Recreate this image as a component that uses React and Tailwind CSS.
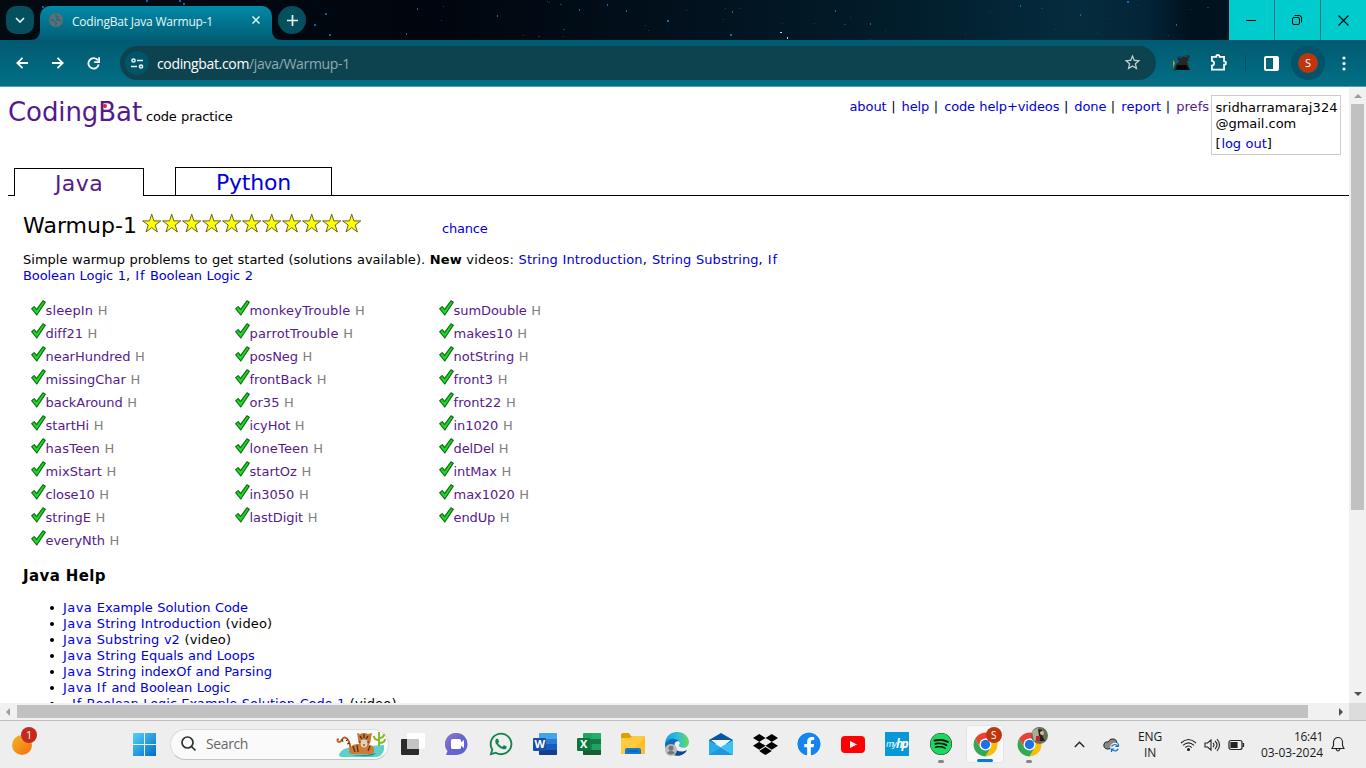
import React from "react";
import { FaWhatsapp, FaDropbox, FaFacebook, FaSpotify } from "react-icons/fa";
import { MdStarBorder } from "react-icons/md";

const ADVANCE = {
  a: 601, b: 623, c: 521, d: 623, e: 596, f: 352, g: 623, h: 633, i: 274, j: 344, k: 592, l: 274, m: 973,
  n: 633, o: 607, p: 623, q: 623, r: 427, s: 521, t: 394, u: 633, v: 592, w: 818, x: 592, y: 592, z: 525,
  A: 684, B: 686, C: 698, D: 771, E: 632, F: 575, G: 775, H: 751, I: 421, J: 455, K: 693, L: 557, M: 843,
  N: 748, O: 787, P: 603, Q: 787, R: 695, S: 684, T: 616, U: 732, V: 684, W: 989, X: 685, Y: 615, Z: 685,
  " ": 352, "-": 454, "(": 454, ")": 454, "[": 454, "]": 454, ",": 364, ".": 364, "|": 454, "@": 1000, "+": 818, ":": 454,
};
const ctx = document.createElement("canvas").getContext("2d");

function Word({ text, size, weight = 400, family = "DejaVu Sans", width }) {
  const target = width ?? [...text].reduce((s, c) => s + (ADVANCE[c] ?? 636), 0) * size / 1000;
  ctx.font = `${weight} ${size}px "${family}"`;
  const spacing = (target - ctx.measureText(text).width) / text.length;
  return (
    <span className="inline-block whitespace-pre" style={{ width: target, letterSpacing: spacing, fontSize: size, fontFamily: `"${family}", sans-serif`, fontWeight: weight }}>{text}</span>
  );
}
function T({ children, size = 13, ...rest }) {
  if (rest.width) return <Word text={children} size={size} {...rest} />;
  return children.split(/( )/).filter(Boolean).map((w, i) => <Word key={i} text={w} size={size} {...rest} />);
}
const Link = ({ children, ...r }) => <span className="text-[#0000d8]"><T {...r}>{children}</T></span>;
const Ui = ({ children, size = 12, width }) => <Word text={children} size={size} width={width} family="Open Sans" />;

const STARS = [[17,8],[147,1],[160,4],[179,9],[43,6],[41,20],[97,15],[163,29],[163,36],[226,10],[245,25],[248,30],[267,20],[286,10],[325,8],[332,11],[323,19],[380,32],[387,37],[382,23],[414,23],[435,10],[444,24],[450,17],[470,23],[485,30],[470,39],[330,34],[340,8],[149,2],[207,4],[123,35],[138,36],[6,33],[565,34],[590,12],[620,5],[641,8],[655,29],[680,14],[697,32],[710,18],[727,1],[737,5],[768,35],[776,24],[790,9],[807,7]];

function Sky() {
  return (
    <svg className="absolute inset-0" width="1366" height="40" aria-hidden="true">
      <defs><linearGradient id="sky"><stop offset="0" stopColor="#020a12"/><stop offset=".33" stopColor="#01060e"/><stop offset=".5" stopColor="#02111d"/><stop offset=".66" stopColor="#021d2b"/><stop offset=".79" stopColor="#052c3d"/><stop offset=".84" stopColor="#032437"/><stop offset=".87" stopColor="#01121f"/><stop offset="1" stopColor="#021622"/></linearGradient></defs>
      <rect width="1366" height="40" fill="url(#sky)" />
      {STARS.map(([x, y], i) => <rect key={i} x={x + 400} y={y} width={i % 5 === 2 ? 2 : 1} height={i % 3 ? 1 : 2} fill={i === 18 || i === 17 ? "#9bdcff" : i % 3 === 0 ? "#126ab5" : "#08416f"} />)}
      {[[42,6],[146,0],[179,0],[183,3],[325,13],[314,24],[329,34]].map(([x,y]) => <rect key={x} x={x} y={y} width="2" height="2" fill="#1264a5"/>)}
    </svg>
  );
}

function TabStrip() {
  return (
    <div className="relative h-10">
      <Sky />
      <div className="relative flex h-10">
        <div className="mt-1.5 ml-1.5 flex h-7 w-7 items-center justify-center rounded-[10px] bg-[#05505f]">
          <svg width="10" height="6" fill="none" stroke="#e6f5f7" strokeWidth="1.7"><path d="M1 1l4 4 4-4" /></svg>
        </div>
        <div className="relative mt-1.5 ml-1.5 flex h-[34px] w-[232px] rounded-t-[10px] bg-linear-to-b from-[#018aa9] to-[#015e75]">
          <svg className="absolute -left-2.5 bottom-0" width="10" height="10"><path d="M10 0v10H0Q10 10 10 0z" fill="#015f76" /></svg>
          <svg className="absolute -right-2.5 bottom-0" width="10" height="10"><path d="M0 0v10h10Q0 10 0 0z" fill="#015f76" /></svg>
          <svg className="mt-[7px] ml-[9px]" width="14" height="14" viewBox="0 0 14 14"><circle cx="7" cy="7" r="7" fill="#686a70"/><path d="M1.800 7.300c1.500-.6 2.800-.2 3.300.9.6 1.200 2.200.6 2.200 2 0 1-.9 1-1.100 2.300M7.300 1.600c-.9 1.300.2 2 1.300 2s.9 1.800-.4 2.100-.4 1.500 1.200 1.300 1.500 1 2.900.7" fill="none" stroke="#04778f" strokeWidth="1.300"/></svg>
          <div className="ml-[9px] h-7 text-[#e9f6f8] leading-[28px]"><Ui width={141}>CodingBat Java Warmup-1</Ui></div>
          <svg className="mt-2.5 ml-[39px]" width="8" height="8" stroke="#e9f6f8" strokeWidth="1.5"><path d="M.5.5l7 7M7.500.5l-7 7" /></svg>
        </div>
        <div className="mt-1.5 ml-1.5 flex h-7 w-7 items-center justify-center rounded-full bg-[#05505f]">
          <svg width="11" height="11" stroke="#e9f6f8" strokeWidth="1.7"><path d="M5.500 0v11M0 5.500h11" /></svg>
        </div>
        <div className="ml-auto flex gap-px bg-[#047c83]">
          <div className="flex w-[45px] items-center justify-center bg-[#01cccd] pr-px"><div className="h-px w-2.5 bg-black" /></div>
          <div className="flex w-[45px] items-center justify-center bg-[#01cccd] pr-px"><svg width="10" height="10" fill="none" stroke="#000"><rect x=".5" y="2.500" width="7" height="7" rx="1.500"/><path d="M2.500.5h4.500a2.500 2.500 0 0 1 2.500 2.500v4.500"/></svg></div>
          <div className="flex w-[45px] items-center justify-center bg-[#01cccd] pr-px"><svg width="11" height="11" stroke="#000" strokeWidth="1.1"><path d="M.5.5l10 10M10.500.5l-10 10"/></svg></div>
        </div>
      </div>
    </div>
  );
}

function Toolbar() {
  return (
    <div className="flex h-[47px] items-start border-b border-[#5b97a5] bg-linear-to-b from-[#015a71] to-[#016f86] pt-1.5 text-white">
      <div className="flex h-[34px] w-[120px] items-center gap-6 pl-4">
        <svg width="12" height="12" fill="none" stroke="#fff" strokeWidth="1.800"><path d="M12 6H1.500M6.500 .8L1.300 6l5.200 5.200"/></svg>
        <svg width="12" height="12" fill="none" stroke="#fff" strokeWidth="1.800"><path d="M0 6h10.500M5.500 .8L10.700 6l-5.200 5.200"/></svg>
        <svg className="-ml-px" width="13" height="13" fill="none" stroke="#fff" strokeWidth="1.800"><path d="M10.800 3.300A5.200 5.200 0 1 0 11.700 7.500M12.100.3v4.900H7.200"/></svg>
      </div>
      <div className="flex h-[34px] w-[1036px] items-center rounded-full bg-[#0d434f] pl-[5px]">
        <div className="flex h-6 w-6 items-center justify-center rounded-full bg-[#015569]">
          <svg width="13" height="11" fill="none" stroke="#eef7f8" strokeWidth="1.5"><circle cx="2.500" cy="2.500" r="1.600"/><path d="M6 2.500h6M0 8.500h6"/><circle cx="10" cy="8.500" r="1.600"/></svg>
        </div>
        <div className="ml-2 leading-[34px]"><Ui size={14} width={92}>codingbat.com</Ui><span className="text-[#8fabb1]"><Ui size={14} width={101}>/java/Warmup-1</Ui></span></div>
        <MdStarBorder className="mr-[14px] mb-0.5 ml-auto" size={19} color="#c4cfd1" />
      </div>
      <div className="flex h-[34px] flex-1 items-center">
        <svg className="ml-[17px]" width="18" height="18"><path d="M4 3l3 1 3-1 4 0 1-2 2 2-2 1 1 2-2 1 1 4 2 5H3L1 17l2-7 3-2z" fill="#252729"/><path d="M0 6l2 3-2 5z" fill="#e28a08"/><path d="M4 11h9l4 5H3z" fill="#050505"/><path d="M5 2q4 2 7 0 5-2 4 2" stroke="#30383c" fill="none"/></svg>
        <svg className="ml-[18px]" width="20" height="20" fill="none" stroke="#fff" strokeWidth="1.8"><path d="M2.900 3.800h4.300c0-2.400 3.400-2.400 3.400 0h4.500v4.500c2.500 0 2.500 3.400 0 3.400v5H2.900v-4c3-.2 3-4.600 0-4.800z"/></svg>
        <div className="ml-[16px] h-4 w-px bg-[#0a4b5c]" />
        <svg className="ml-[18px]" width="15" height="15"><rect x="1" y="1" width="13" height="13" rx="1" fill="none" stroke="#fff" strokeWidth="2"/><path d="M9 1h5v13H9z" fill="#fff"/></svg>
        <div className="ml-3 flex h-[34px] w-[34px] items-center justify-center rounded-full bg-[#03536a]"><div className="flex h-5 w-5 items-center justify-center rounded-full bg-[#bf360c] leading-5"><Ui size={11} width={6}>S</Ui></div></div>
        <svg className="ml-[17px]" width="4" height="15" fill="#fff"><circle cx="2" cy="2" r="1.600"/><circle cx="2" cy="7.500" r="1.600"/><circle cx="2" cy="13" r="1.600"/></svg>
      </div>
    </div>
  );
}

const StarIcon = () => <svg width="20" height="21"><path d="M9.700 1.200l2.200 6.700h6.900l-5.600 4.100 2.200 7-5.700-4.300-5.700 4.300 2.200-7L.6 7.900h6.900z" fill="#ff0" stroke="#55551b" strokeWidth=".9"/></svg>;
const Check = () => <svg className="mt-px shrink-0" width="15" height="16"><path d="M.7 8.600l2.500-2 2.300 3L12 .8l2.300 1.400L5.800 15z" fill="#1ddd24" stroke="#116c16" strokeWidth="1.200" strokeLinejoin="round"/></svg>;

const PROBLEMS = [
  ["sleepIn", "monkeyTrouble", "sumDouble"], ["diff21", "parrotTrouble", "makes10"], ["nearHundred", "posNeg", "notString"],
  ["missingChar", "frontBack", "front3"], ["backAround", "or35", "front22"], ["startHi", "icyHot", "in1020"],
  ["hasTeen", "loneTeen", "delDel"], ["mixStart", "startOz", "intMax"], ["close10", "in3050", "max1020"],
  ["stringE", "lastDigit", "endUp"], ["everyNth"],
];
const HELP = [["Java Example Solution Code"], ["Java String Introduction", " (video)"], ["Java Substring v2", " (video)"], ["Java String Equals and Loops"], ["Java String indexOf and Parsing"], ["Java If and Boolean Logic"], ["If Boolean Logic Example Solution Code 1", " (video)"]];
const NAV = ["about", "help", "code help+videos", "done", "report"];

function Page() {
  return (
    <main className="h-[616px] w-[1349px] overflow-hidden bg-white font-['DejaVu_Sans',sans-serif] text-[13px] text-black">
      <div className="flex h-20 pl-2">
        <div className="mt-1.5 h-10 text-[#551a8b] text-[26px] leading-[38px]">
          <span className="relative"><Word text="CodingBat" size={26} width={134} /><span className="absolute top-[7px] left-[95px] h-1 w-1 rounded-full bg-[#f01830]" /></span>
        </div>
        <div className="mt-[22px] ml-[4px] leading-4"><T>code practice</T></div>
        <div className="mt-3 ml-auto leading-4 whitespace-nowrap">
          {NAV.map((n) => <React.Fragment key={n}><Link>{n}</Link><T>{" | "}</T></React.Fragment>)}<span className="text-[#551a8b]"><T>prefs</T></span>
        </div>
        <div className="mt-2 mr-2 ml-[2px] h-[60px] w-[130px] shrink-0 border border-[#ccc] pt-[4px] pl-[3.5px] leading-4">
          <div className="h-4 whitespace-nowrap"><T>sridharramaraj324</T></div><div className="h-5"><T>@gmail.com</T></div><div><T>[</T><Link>log out</Link><T>]</T></div>
        </div>
      </div>
      <div className="ml-2 flex h-[29px] items-end text-[22px]">
        <div className="h-px w-1.5 bg-black" />
        <div className="h-7 w-[130px] border border-b-0 border-black text-center text-[#551a8b] leading-[29px]"><Word text="Java" size={22} width={48} /></div>
        <div className="h-px w-[31px] bg-black" />
        <div className="h-[29px] w-[157px] border border-black text-center leading-[29px]"><span className="text-[#0000d8]"><Word text="Python" size={22} width={75} /></span></div>
        <div className="h-px flex-1 bg-black" />
      </div>
      <div className="flex h-14 pl-[23px]">
        <div className="mt-[15px] w-[119px] text-[22px] leading-[30px]"><Word text="Warmup-1" size={22} width={114} /></div>
        <div className="mt-[17px] flex h-[21px]">{Array.from({ length: 11 }, (_, i) => <StarIcon key={i} />)}</div>
        <div className="mt-[25px] ml-20 leading-4"><Link>chance</Link></div>
      </div>
      <div className="h-[47px] pl-[23px] leading-4">
        <div className="h-4 whitespace-nowrap"><T>Simple warmup problems to get started (solutions available). </T><Word text="New" size={13} weight={700} width={32} /><T>{" videos: "}</T><Link>String Introduction</Link><T>{", "}</T><Link>String Substring</Link><T>{", "}</T><Link>If</Link></div>
        <div className="h-4 whitespace-nowrap"><Link>Boolean Logic 1</Link><T>{", "}</T><Link>If Boolean Logic 2</Link></div>
      </div>
      <div className="pl-[31px]">
        {PROBLEMS.map((row) => (
          <div key={row[0]} className="flex h-[23px] leading-[23px]">
            {row.map((p) => <div key={p} className="flex w-[204px] text-[#551a8b]"><Check /><div className="-ml-[0.5px] whitespace-nowrap"><T>{p}</T><span className="text-[#808080]"><T>{" H"}</T></span></div></div>)}
          </div>
        ))}
      </div>
      <div className="h-[48px] pt-[14px] pl-[23px] text-[15px] leading-5"><Word text="Java Help" size={15} weight={700} width={83} /></div>
      <ul>
        {HELP.map(([a, b], i) => (
          <li key={a} className="flex h-4 items-center pl-[50px] leading-4"><span className="mr-[9px] h-1 w-1 rounded-full bg-black" /><div className={i === 6 ? "pl-[9px]" : ""}><Link>{a}</Link>{b && <T>{b}</T>}</div></li>
        ))}
      </ul>
    </main>
  );
}

const Chrome = () => (
  <svg width="25" height="25" viewBox="0 0 48 48"><path d="M4.100 12.500A23 23 0 0 1 43.900 12.500H24L14 29.800z" fill="#ea4335"/><path d="M43.900 12.500A23 23 0 0 1 24 47L34 29.800 24 12.500z" fill="#fbbc04"/><path d="M4.100 12.500A23 23 0 0 0 24 47l10-17.200L14 29.800z" fill="#34a853"/><circle cx="24" cy="24" r="11.500" fill="#fff"/><circle cx="24" cy="24" r="9" fill="#1a73e8"/></svg>
);
const Office = ({ letter, c }) => (
  <div className="relative h-6 w-6">
    <svg width="24" height="24"><rect x="6" y="1" width="18" height="22" rx="1" fill={c[0]}/><path d="M6 7h18v5H6z" fill={c[1]}/><path d="M6 12h18v6H6z" fill={c[2]}/><path d="M6 18h18v4q0 1-1 1H7q-1 0-1-1z" fill={c[3]}/>{letter === "X" && <path d="M15 1h8q1 0 1 1v5h-9zM15 12h9v6h-9z" fill="#23b66f" opacity=".65"/>}<rect y="6" width="13" height="13" rx="1" fill={c[4]}/></svg>
    <div className="absolute top-[5px] left-0 flex h-[13px] w-[13px] items-center justify-center text-white leading-[13px]"><Word text={letter} size={11} weight={700} family="Open Sans" width={letter === "W" ? 10 : 7} /></div>
  </div>
);

const Teams = () => <svg width="24" height="24"><defs><linearGradient id="tm" x2="1" y2="1"><stop stopColor="#967dcd"/><stop offset=".45" stopColor="#6a65c9"/><stop offset="1" stopColor="#5361df"/></linearGradient></defs><path d="M12 1a11 11 0 1 1-1 22H1l1.500-4A11 11 0 0 1 12 1z" fill="url(#tm)"/><rect x="6" y="7" width="10" height="10" rx="1.500" fill="#fff"/><path d="M15 11l4-3v8l-4-3z" fill="#fff"/></svg>;
const Folder = () => <svg width="24" height="24"><path d="M0 3q0-2 2-2h6l2 3h13q1 0 1 1v17H0z" fill="#dca000"/><path d="M0 6h9l2-2h13v18H0z" fill="#ffca3d"/><path d="M24 5v17H8z" fill="#ffbe23"/><path d="M4 22v-4q0-2 2-2h12q2 0 2 2v4z" fill="#137ad0"/><path d="M7 19h10" stroke="#0a539e"/></svg>;
const Edge = () => <svg width="24" height="24"><defs><linearGradient id="ed"><stop stopColor="#2299df"/><stop offset=".5" stopColor="#29bde0"/><stop offset="1" stopColor="#65da55"/></linearGradient></defs><path d="M0 13C0 5 5 0 12 0s12 5 12 10c0 5-5 7-9 5-2-1-1-2 0-4-4-5-11-3-15 2z" fill="url(#ed)"/><path d="M0 12C4 5 10 6 14 9c-6 0-6 7-1 10 4 2 7 1 9-1-3 5-9 7-14 5S0 18 0 12z" fill="#126dbc"/><path d="M10 12c-2 8 6 9 12 6-3 6-9 6-12 5z" fill="#0c4c8c"/><circle cx="6" cy="18" r="6" fill="#bdbdbd"/><circle cx="6" cy="16" r="2.500" fill="#777"/><path d="M2 21q4-5 8 0-4 3-8 0" fill="#777"/></svg>;
const Mail = () => <svg width="24" height="24"><path d="M0 8l12-7 12 7v4H0z" fill="#0855a2"/><path d="M2 8h20l-10 8z" fill="#f1f8fc"/><path d="M0 8l24 15H0z" fill="#27aee8"/><path d="M24 8v15L12 15z" fill="#36c4f1"/><path d="M24 23L12 15.500 0 23z" fill="#2196dc"/></svg>;
const YouTube = () => <svg width="24" height="24"><rect y="4" width="24" height="17" rx="4" fill="#f00"/><path d="M9 9l7 3.500L9 16z" fill="#fff"/></svg>;
const TaskView = () => <svg width="24" height="24"><rect y="7" width="18" height="16" rx="1" fill="#2b2b2b"/><rect x="6" y="1" width="18" height="16" rx="1" fill="#fff"/><path d="M6 7h12v10H6z" fill="#c4c4c4"/></svg>;
const Tiger = () => (
  <svg width="50" height="27" viewBox="0 0 50 27">
    <path d="M3 24q2-8 17-8l28-2q1 10-7 12H8q-5 0-5-2z" fill="#5fd0c7"/><path d="M12 23q12 3 28-1l-2 2q-12 3-26-1z" fill="#278f91"/>
    <path d="M15 20C14 12 12 7 9 6.500S6 11 3.500 11 1 8.500 2.500 7.500" fill="none" stroke="#b76228" strokeWidth="2"/><path d="M14 12l-3 1m1-5l-2 2M6 8l1 3" stroke="#4c2d20"/>
    <path d="M13 20q2-8 10-7h9q7 2 6 7 0 3-4 3H17q-4 0-4-3z" fill="#d07a36"/><path d="M17 15l2 6m2-7l1 7m12-6l-2 5" stroke="#4c2d20" strokeWidth="1.200"/>
    <path d="M21 2l3 1q4-2 8 0l4-1-1 5q0 8-7 9-6-1-6-8z" fill="#c87737"/><path d="M24 10q4-3 8 0l-1 5q-3 3-6 0z" fill="#e5d2b6"/><path d="M28 3v4m-4-2l2 3m6-3l-2 3m-7 3h2m6 0h2m-6 3h2" stroke="#392720" strokeWidth="1.200"/>
    <path d="M43 15V1m0 8q-5 0-5-4m5 2q5 0 5-4m-5 9q6 0 6-4" fill="none" stroke="#86b927" strokeWidth="2"/>
  </svg>
);
const AppSlot = ({ children, dot }) => <div className="relative flex h-12 w-11 shrink-0 items-center justify-center pb-px">{children}{dot && <div className="absolute bottom-[6px] left-[19px] h-[3px] w-1.5 rounded-full bg-[#858585]" />}</div>;

function Taskbar() {
  return (
    <footer className="flex h-12 items-center border-t border-[#bdbdbd] bg-[#eeeeee] font-['Open_Sans',sans-serif] text-xs text-[#191919]">
      <div className="relative ml-3 h-12 w-[121px] shrink-0"><div className="mt-[14px] h-5 w-5 rounded-full bg-linear-to-br from-[#efb52b] to-[#f26a0b]" /><div className="absolute top-[6px] left-[9px] flex h-4 w-4 items-center justify-center rounded-full bg-[#c42b1c] text-white leading-4"><Ui size={11} width={6}>1</Ui></div></div>
      <svg className="shrink-0" width="23" height="23"><defs><linearGradient id="wn" gradientUnits="userSpaceOnUse" x2="23" y2="23"><stop stopColor="#54d1f9"/><stop offset="1" stopColor="#006ccb"/></linearGradient></defs><path d="M0 0h11v11H0zM12 0h11v11H12zM0 12h11v11H0zM12 12h11v11H12z" fill="url(#wn)"/></svg>
      <div className="ml-[14px] flex h-[31px] w-[219px] shrink-0 items-center rounded-full border border-[#dcdcdc] border-b-[#c4c4c4] bg-[#fafafa] pb-px">
        <svg className="ml-2.5" width="16" height="16" fill="none" stroke="#303030" strokeWidth="1.700"><circle cx="6.500" cy="6.500" r="5.500"/><path d="M10.500 10.500l4 4"/></svg>
        <div className="ml-[9px] text-[#666] leading-[29px]"><Ui size={14} width={42}>Search</Ui></div><div className="ml-[88px]"><Tiger /></div>
      </div>
      <div className="ml-[2px] flex">
        <AppSlot><TaskView /></AppSlot><AppSlot><Teams /></AppSlot><AppSlot><FaWhatsapp size={26} color="#168451" /></AppSlot>
        <AppSlot><Office letter="W" c={["#41a5ee", "#2b7cd3", "#185abd", "#103f91", "#174fa9"]} /></AppSlot>
        <AppSlot><Office letter="X" c={["#21a366", "#107c41", "#15854c", "#185c37", "#0e763c"]} /></AppSlot>
        <AppSlot><Folder /></AppSlot><AppSlot><Edge /></AppSlot><AppSlot><Mail /></AppSlot><AppSlot><FaDropbox size={25} color="#000" /></AppSlot>
        <AppSlot><FaFacebook size={24} color="#1485ef" className="rounded-full bg-white" /></AppSlot><AppSlot><YouTube /></AppSlot>
        <AppSlot><div className="flex h-6 w-6 items-center justify-center bg-[#0799d5] text-white italic leading-6"><Word text="my" size={9} width={10} family="Open Sans" /><Word text="hp" size={12} width={12} weight={700} family="Open Sans" /></div></AppSlot>
        <AppSlot dot><FaSpotify size={22} color="#1ed760" className="rounded-full bg-[#07150c]" /></AppSlot>
        <AppSlot><div className="relative flex h-[38px] w-[38px] items-center justify-center rounded border border-[#e5e5e5] bg-[#f8f8f8]"><Chrome /><div className="absolute top-[1px] right-[1px] flex h-4 w-4 items-center justify-center rounded-full bg-[#bf360c] text-white leading-4"><Ui size={10} width={6}>S</Ui></div><div className="absolute bottom-0 left-[10px] h-[3px] w-4 rounded-full bg-[#0878d4]" /></div></AppSlot>
        <AppSlot dot><Chrome /><svg className="absolute top-[6px] right-[3px]" width="17" height="17"><circle cx="8.500" cy="8.500" r="8.500" fill="#607252"/><path d="M1 4l6-3 4 5-8 9z" fill="#a9ae94"/><path d="M7 2l4 1v5l3 6H5l3-5z" fill="#291d20"/><path d="M5 9h4v5H5z" fill="#bd2528"/><circle cx="11" cy="6" r="2" fill="#d9b5a2"/></svg></AppSlot>
      </div>
      <svg className="ml-[23px] shrink-0" width="11" height="7" fill="none" stroke="#222" strokeWidth="1.400"><path d="M.8 6l4.700-4.700L10.200 6"/></svg>
      <svg className="ml-[18px] shrink-0" width="17" height="16"><path d="M4 12q-4-1-3-5 1-3 4-2 2-4 6-3 3 1 3 4 3 2 1 5z" fill="#888" stroke="#282828"/><circle cx="12" cy="10.500" r="4.800" fill="#f2f2f2"/><path d="M8.500 9.500q3.500-4 6.500 0M15.300 6.500v3h-3M15.300 12q-3.500 4-6.500 0M8.500 15v-3h3" fill="none" stroke="#0b72ce" strokeWidth="1.200"/></svg>
      <div className="ml-[17px] w-[26px] text-center leading-4"><div><Ui width={24}>ENG</Ui></div><div><Ui width={12}>IN</Ui></div></div>
      <svg className="ml-[17px] shrink-0" width="17" height="14" fill="none" stroke="#222" strokeWidth="1.100"><path d="M1 5q7.500-7 15 0M3 7.300q5.500-5 11 0M5.300 9.500q3.200-3 6.400 0"/><circle cx="8.500" cy="11.500" r="1" fill="#222"/></svg>
      <svg className="ml-[7px] shrink-0" width="17" height="14" fill="none" stroke="#222" strokeWidth="1.100"><path d="M1 5h2.500L7 2v10L3.500 9H1zM9 5q2 2 0 4M11 3q4 4 0 8M13 1q5 6 0 12"/></svg>
      <svg className="ml-[7px] shrink-0" width="17" height="12" fill="none" stroke="#222" strokeWidth="1.200"><rect x="1" y="1.500" width="13" height="9" rx="2"/><path d="M3 3.500h6v5H3z" fill="#222"/><path d="M14.500 4.500h1v3h-1" /></svg>
      <div className="ml-[15px] w-[63px] text-right leading-4"><div><Ui width={29}>16:41</Ui></div><div className="-ml-1 whitespace-nowrap"><Ui width={62}>03-03-2024</Ui></div></div>
      <svg className="ml-[8px] shrink-0" width="14" height="17" fill="none" stroke="#222" strokeWidth="1.100"><path d="M1 12.500l1.500-3V6a4.500 4.500 0 0 1 9 0v3.500l1.500 3zM5 13q2 4 4 0"/></svg>
    </footer>
  );
}

export default function App() {
  return (
    <div className="h-[768px] w-[1366px] overflow-hidden bg-white">
      <TabStrip /><Toolbar />
      <div className="flex h-[616px]">
        <Page />
        <div className="flex w-[17px] flex-col items-center bg-[#f1f1f1]">
          <svg className="mt-[7px]" width="8" height="4"><path d="M0 4l4-4 4 4z" fill="#9c9c9c"/></svg><div className="mt-1.5 h-[406px] w-[13px] bg-[#c1c1c1]" /><svg className="mt-auto mb-[7px]" width="8" height="4"><path d="M0 0l4 4 4-4z" fill="#505050"/></svg>
        </div>
      </div>
      <div className="flex h-[17px] items-center bg-[#f1f1f1]"><svg className="ml-1.5" width="4" height="8"><path d="M4 0L0 4l4 4z" fill="#9c9c9c"/></svg><div className="ml-[7px] h-[13px] w-[1291px] bg-[#c1c1c1]" /><svg className="ml-[31px]" width="4" height="8"><path d="M0 0l4 4-4 4z" fill="#505050"/></svg><div className="ml-auto h-[17px] w-[17px] bg-[#dcdcdc]" /></div>
      <Taskbar />
    </div>
  );
}
